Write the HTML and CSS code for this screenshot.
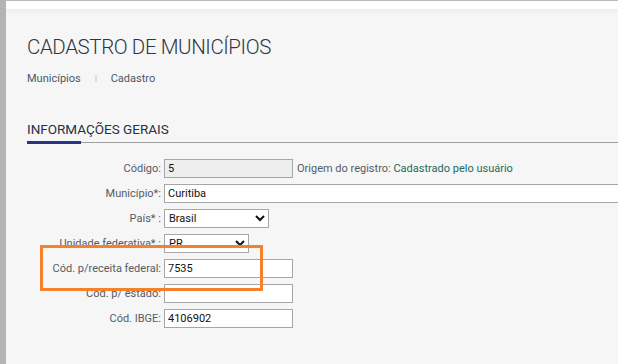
FILE: index.html
```html
<!DOCTYPE html>
<html lang="pt-BR">
<head>
    <meta charset="UTF-8">
    <meta name="viewport" content="width=device-width, initial-scale=1.0">
    <title>Cadastro de Municípios</title>
    <link rel="stylesheet" href="styles.css">
</head>
<body>

    <div class="topbar"></div>

    <div class="page">
        <h1 class="page-title">CADASTRO DE MUNICÍPIOS</h1>
        <div class="breadcrumb">
            <span>Municípios</span>
            <span class="sep"></span>
            <span>Cadastro</span>
        </div>

        <h2 class="section-title">INFORMAÇÕES GERAIS</h2>
        <div class="rule"></div>

        <div class="form">
            <div class="row">
                <label>Código:</label>
                <input type="text" class="field short readonly" value="5" readonly>
                <span class="origin">Origem do registro: <span class="origin-value">Cadastrado pelo usuário</span></span>
            </div>
            <div class="row">
                <label>Município*:</label>
                <input type="text" class="field wide" value="Curitiba">
            </div>
            <div class="row">
                <label>País* :</label>
                <select class="field country">
                    <option selected>Brasil</option>
                </select>
            </div>
            <div class="row">
                <label>Unidade federativa* :</label>
                <select class="field state">
                    <option selected>PR</option>
                </select>
            </div>
            <div class="row">
                <label>Cód. p/receita federal:</label>
                <input type="text" class="field short" value="7535">
            </div>
            <div class="row">
                <label>Cód. p/ estado:</label>
                <input type="text" class="field short" value="">
            </div>
            <div class="row">
                <label>Cód. IBGE:</label>
                <input type="text" class="field short" value="4106902">
            </div>

            <!-- highlight annotation -->
            <div class="highlight"></div>
        </div>
    </div>

</body>
</html>
```

FILE: styles.css
```css
/* Basic reset */
* {
    margin: 0;
    padding: 0;
    box-sizing: border-box;
}

body {
    font-family: 'Roboto', 'Liberation Sans', sans-serif;
    background-color: #f6f6f6;
    border-left: 6px solid #b4b4b4;
    min-height: 100vh;
    color: #333;
}

.topbar {
    height: 9px;
    background-color: #fff;
    border-top: 1px solid #b9b9b9;
    box-shadow: 0 2px 4px rgba(0, 0, 0, 0.05);
}

.page {
    padding-left: 21px;
}

.page-title {
    margin-top: 25px;
    font-size: 20.5px;
    line-height: 26px;
    letter-spacing: -0.4px;
    font-weight: 300;
    color: #2f3542;
}

.breadcrumb {
    margin-top: 12px;
    display: flex;
    align-items: center;
    font-size: 11px;
    line-height: 13px;
    color: #4d5666;
}

.breadcrumb .sep {
    width: 2px;
    height: 7px;
    margin: 0 14px;
    background-color: #dedede;
}

.section-title {
    margin-top: 36px;
    font-size: 13.5px;
    line-height: 16px;
    font-weight: 400;
    color: #283048;
}

.rule {
    margin-top: 4px;
    height: 3px;
    display: flex;
    align-items: center;
}

.rule::before {
    content: '';
    width: 54px;
    height: 3px;
    background-color: #2b3480;
}

.rule::after {
    content: '';
    flex: 1;
    height: 1px;
    background-color: #a0a0a0;
}

.form {
    position: relative;
    margin-top: 15px;
    display: flex;
    flex-direction: column;
    gap: 6px;
}

.row {
    display: flex;
    align-items: center;
    height: 19px;
    gap: 3px;
    font-size: 11px;
}

.row label {
    width: 134px;
    flex-shrink: 0;
    text-align: right;
    color: #555b66;
    white-space: nowrap;
}

.field {
    height: 19px;
    flex-shrink: 0;
    font-family: 'Roboto', 'Liberation Sans', sans-serif;
    font-size: 11px;
    color: #111;
    background-color: #fff;
    border: 1px solid #a6a6a6;
    border-radius: 0;
    padding: 0 3px;
    outline: none;
}

select.field {
    padding: 0;
}

.field.short {
    width: 129px;
}

/* runs on past the right edge of the window */
.field.wide {
    flex: 1;
    min-width: 0;
    border-right: none;
}

.field.readonly {
    background-color: #eeeeee;
}

.field.country {
    width: 105px;
}

.field.state {
    width: 85px;
}

.origin {
    margin-left: 1px;
    color: #555b66;
    white-space: nowrap;
}

.origin-value {
    color: #226a5c;
}

.highlight {
    position: absolute;
    left: 13px;
    top: 86px;
    width: 223px;
    height: 46px;
    border: 3px solid #f5822a;
    pointer-events: none;
}
```
